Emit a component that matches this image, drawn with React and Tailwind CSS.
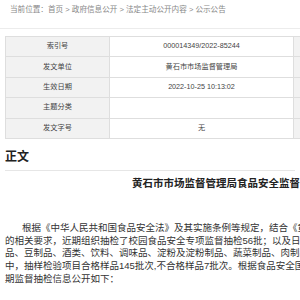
import React from "react";

const rows = [
  ["索引号", "000014349/2022-85244"],
  ["发文单位", "黄石市市场监督管理局"],
  ["生效日期", "2022-10-25 10:13:02"],
  ["主题分类", ""],
  ["发文字号", "无"],
];

const lines = [
  "根据《中华人民共和国食品安全法》及其实施条例等规定，结合《黄石市2022年食品安全抽检监测计划》",
  "的相关要求，近期组织抽检了校园食品安全专项监督抽检56批；以及日常监督抽检",
  "品、豆制品、酒类、饮料、调味品、淀粉及淀粉制品、蔬菜制品、肉制品等",
  "中，抽样检验项目合格样品145批次,不合格样品7批次。根据食品安全国家标准",
  "期监督抽检信息公开如下：",
];

export default function App() {
  return (
    <div
      className="w-[300px] h-[300px] overflow-hidden bg-white text-[#333]"
      style={{ fontFamily: '"Liberation Sans", "Noto Sans CJK SC", sans-serif' }}
    >
      <div className="h-[29px] border-b border-[#ececec] pt-[4px] pl-[10px] text-[7.6px] leading-[12px] text-[#888] whitespace-nowrap">
        当前位置：首页 &gt; 政府信息公开 &gt; 法定主动公开内容 &gt; 公示公告
      </div>

      <div className="mt-[7px] ml-[5px] w-[400px] border-t border-l border-[#dedede] text-[7.2px] text-[#444]">
        {rows.map(([k, v]) => (
          <div key={k} className="flex h-[20.4px] border-b border-[#dedede]">
            <div className="w-[104px] shrink-0 bg-[#f2f2f2] border-r border-[#dedede] flex items-center justify-center">
              {k}
            </div>
            <div className="w-[184px] shrink-0 bg-white border-r border-[#dedede] flex items-center justify-center">
              {v}
            </div>
            <div className="w-[104px] shrink-0 bg-[#f2f2f2]"></div>
          </div>
        ))}
      </div>

      <div className="mt-[9px] mx-[5px] h-[23px] border-b border-[#e6e6e6] text-[12px] leading-[14px] font-bold text-[#222] pt-[2px]">
        正文
      </div>

      <div className="mt-[5px] pl-[132px] text-[10.5px] leading-[14px] font-bold text-[#222] whitespace-nowrap">
        黄石市市场监督管理局食品安全监督抽检信息公告
      </div>

      <div className="mt-[32px] pl-[5px] text-[9.5px] leading-[12.7px] text-[#333] whitespace-nowrap">
        {lines.map((l, i) => (
          <div key={i} className={i === 0 ? "pl-[17px]" : ""}>
            {l}
          </div>
        ))}
      </div>
    </div>
  );
}
